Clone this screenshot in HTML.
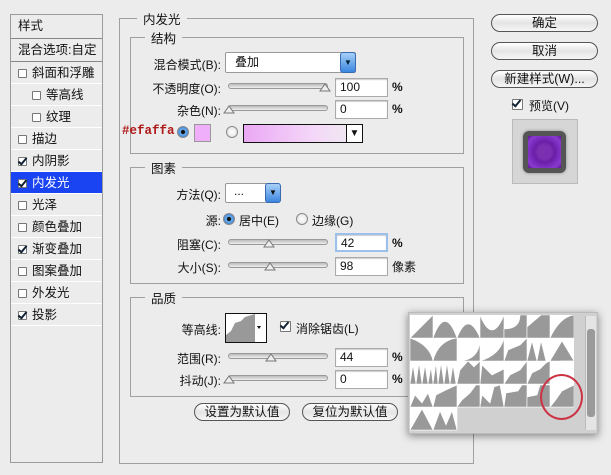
<!DOCTYPE html>
<html><head><meta charset="utf-8"><style>
*{box-sizing:border-box;margin:0;padding:0}
body{width:611px;height:475px;background:#ececec;font-family:"Liberation Sans","Noto Sans CJK SC",sans-serif;font-size:12px;color:#111;position:relative;overflow:hidden}
.a{position:absolute}
.lp{left:10px;top:14px;width:93px;height:449px;border:1px solid #9a9a9a;background:#ececec}
.row{position:absolute;left:0;width:91px;height:22px;line-height:22px;padding-left:7px;border-bottom:1px solid #fff;font-size:12.5px;white-space:nowrap}
.cb{display:inline-block;width:9px;height:9px;border:1px solid #777;background:#fff;vertical-align:-1px;margin-right:5px;border-radius:1px;position:relative}
.cb.on::after{content:"";position:absolute;left:1px;top:-2px;width:3px;height:7px;border:solid #123;border-width:0 2px 2px 0;transform:rotate(40deg)}
.box{position:absolute;border:1px solid #a0a0a0}
.tt{position:absolute;background:#ececec;padding:0 6px;font-size:12.5px}
.lb{position:absolute;text-align:right;font-size:12px;white-space:nowrap}
.in{position:absolute;width:53px;height:19px;border:1px solid #aaa;background:#fff;padding-left:4px;line-height:17px;font-size:12px;box-shadow:inset 0 1px 1px #ccc}
.sl{position:absolute;height:6px;border-radius:3px;border:1px solid #999;background:linear-gradient(#bbb,#eee)}
.th{position:absolute;width:12px;height:8px}
.btn{position:absolute;height:18px;border:1px solid #555;border-radius:9px;background:linear-gradient(#fff,#e4e4e4 50%,#f6f6f6);text-align:center;line-height:16px;font-size:12.5px}
.rd{position:absolute;width:12px;height:12px;border-radius:50%;border:1px solid #888;background:radial-gradient(#fff,#ddd)}
.rd.on{background:radial-gradient(#111 25%,#6ab0f0 35%,#2a6cc8)}
.pct{position:absolute;font-size:12px;font-weight:bold}
</style></head><body>

<div class="a lp">
 <div class="row" style="top:0;height:24px;border-bottom:1px solid #888">样式</div>
 <div class="row" style="top:24px;height:23px;border-bottom:1px solid #888">混合选项:自定</div>
 <div class="row" style="top:47px"><span class="cb"></span>斜面和浮雕</div>
 <div class="row" style="top:69px;padding-left:21px"><span class="cb"></span>等高线</div>
 <div class="row" style="top:91px;padding-left:21px"><span class="cb"></span>纹理</div>
 <div class="row" style="top:113px"><span class="cb"></span>描边</div>
 <div class="row" style="top:135px"><span class="cb on"></span>内阴影</div>
 <div class="row" style="top:157px;background:#1a43f2;color:#fff"><span class="cb on"></span>内发光</div>
 <div class="row" style="top:179px"><span class="cb"></span>光泽</div>
 <div class="row" style="top:201px"><span class="cb"></span>颜色叠加</div>
 <div class="row" style="top:223px"><span class="cb on"></span>渐变叠加</div>
 <div class="row" style="top:245px"><span class="cb"></span>图案叠加</div>
 <div class="row" style="top:267px"><span class="cb"></span>外发光</div>
 <div class="row" style="top:289px"><span class="cb on"></span>投影</div>
</div>

<div class="box" style="left:119px;top:18px;width:355px;height:446px"></div>
<div class="tt" style="left:137px;top:9px">内发光</div>

<div class="box" style="left:130px;top:37px;width:334px;height:117px"></div>
<div class="tt" style="left:145px;top:28px">结构</div>
<div class="lb" style="right:390px;top:56px">混合模式(B):</div>
<div class="a" style="left:225px;top:52px;width:131px;height:21px;border:1px solid #999;background:#fff;padding-left:9px;line-height:19px;border-radius:2px">叠加</div>
<div class="a" style="left:340px;top:52px;width:16px;height:21px;border-radius:3px;background:linear-gradient(#a8d0f8,#3c86e0);border:1px solid #3a6ab0;color:#023;font-size:8px;text-align:center;line-height:19px">▼</div>
<div class="lb" style="right:390px;top:80px">不透明度(O):</div>
<div class="sl" style="left:228px;top:83px;width:100px"></div>
<svg class="th" style="left:319px;top:82px;height:10px" viewBox="0 0 12 10"><path d="M1 9L6 2L11 9Z" fill="#eee" stroke="#777"/></svg>
<div class="in" style="left:335px;top:78px">100</div><div class="pct" style="left:392px;top:80px">%</div>
<div class="lb" style="right:390px;top:102px">杂色(N):</div>
<div class="sl" style="left:228px;top:105px;width:100px"></div>
<svg class="th" style="left:223px;top:104px;height:10px" viewBox="0 0 12 10"><path d="M1 9L6 2L11 9Z" fill="#eee" stroke="#777"/></svg>
<div class="in" style="left:335px;top:100px">0</div><div class="pct" style="left:392px;top:102px">%</div>
<div class="a" style="left:122px;top:124px;color:#b01818;font-family:'Liberation Mono',monospace;font-weight:bold;font-size:12.5px">#efaffa</div>
<div class="rd on" style="left:177px;top:126px"></div>
<div class="a" style="left:194px;top:124px;width:17px;height:18px;background:#efaffa;border:1px solid #999"></div>
<div class="rd" style="left:226px;top:126px"></div>
<div class="a" style="left:243px;top:124px;width:120px;height:19px;border:1px solid #111;background:linear-gradient(90deg,#eaa8f4,#f4d8f8 60%,#eee)"></div>
<div class="a" style="left:346px;top:124px;width:17px;height:19px;border:1px solid #111;background:#fff;font-size:10px;text-align:center;line-height:17px">▼</div>

<div class="box" style="left:130px;top:167px;width:334px;height:117px"></div>
<div class="tt" style="left:145px;top:158px">图素</div>
<div class="lb" style="right:390px;top:186px">方法(Q):</div>
<div class="a" style="left:225px;top:183px;width:55px;height:20px;border:1px solid #999;background:#fff;padding-left:8px;line-height:14px;border-radius:2px">...</div>
<div class="a" style="left:265px;top:183px;width:16px;height:20px;border-radius:3px;background:linear-gradient(#a8d0f8,#3c86e0);border:1px solid #3a6ab0;font-size:8px;text-align:center;line-height:18px">▼</div>
<div class="lb" style="right:390px;top:212px">源:</div>
<div class="rd on" style="left:223px;top:213px"></div><div class="a" style="left:239px;top:212px">居中(E)</div>
<div class="rd" style="left:296px;top:213px"></div><div class="a" style="left:312px;top:212px">边缘(G)</div>
<div class="lb" style="right:390px;top:236px">阻塞(C):</div>
<div class="sl" style="left:228px;top:239px;width:100px"></div>
<svg class="th" style="left:263px;top:238px;height:10px" viewBox="0 0 12 10"><path d="M1 9L6 2L11 9Z" fill="#eee" stroke="#777"/></svg>
<div class="in" style="left:335px;top:233px;border:2px solid #9cc0ea">42</div><div class="pct" style="left:392px;top:236px">%</div>
<div class="lb" style="right:390px;top:259px">大小(S):</div>
<div class="sl" style="left:228px;top:262px;width:100px"></div>
<svg class="th" style="left:264px;top:261px;height:10px" viewBox="0 0 12 10"><path d="M1 9L6 2L11 9Z" fill="#eee" stroke="#777"/></svg>
<div class="in" style="left:335px;top:257px">98</div><div class="a" style="left:392px;top:258px">像素</div>

<div class="box" style="left:130px;top:297px;width:334px;height:100px"></div>
<div class="tt" style="left:145px;top:288px">品质</div>
<div class="lb" style="right:390px;top:321px">等高线:</div>
<svg class="a" style="left:225px;top:313px" width="42" height="30" viewBox="0 0 42 30"><rect x="0.5" y="0.5" width="41" height="29" fill="#fff" stroke="#111"/><path d="M1 29L1 22L6 18L10 10L16 8L20 4L30 1L30 29Z" fill="#999"/><rect x="30" y="1" width="11" height="28" fill="#fff"/><path d="M32 13l4 0l-2 3z" fill="#111"/></svg>
<span class="cb on" style="position:absolute;left:280px;top:321px;width:11px;height:11px"></span>
<div class="a" style="left:296px;top:320px">消除锯齿(L)</div>
<div class="lb" style="right:390px;top:350px">范围(R):</div>
<div class="sl" style="left:228px;top:353px;width:100px"></div>
<svg class="th" style="left:265px;top:352px;height:10px" viewBox="0 0 12 10"><path d="M1 9L6 2L11 9Z" fill="#eee" stroke="#777"/></svg>
<div class="in" style="left:335px;top:348px">44</div><div class="pct" style="left:392px;top:350px">%</div>
<div class="lb" style="right:390px;top:372px">抖动(J):</div>
<div class="sl" style="left:228px;top:375px;width:100px"></div>
<svg class="th" style="left:223px;top:374px;height:10px" viewBox="0 0 12 10"><path d="M1 9L6 2L11 9Z" fill="#eee" stroke="#777"/></svg>
<div class="in" style="left:335px;top:370px">0</div><div class="pct" style="left:392px;top:372px">%</div>

<div class="btn" style="left:194px;top:403px;width:96px">设置为默认值</div>
<div class="btn" style="left:302px;top:403px;width:96px">复位为默认值</div>

<div class="btn" style="left:491px;top:14px;width:107px">确定</div>
<div class="btn" style="left:491px;top:42px;width:107px">取消</div>
<div class="btn" style="left:491px;top:70px;width:107px">新建样式(W)...</div>
<span class="cb on" style="position:absolute;left:512px;top:99px;width:11px;height:11px"></span>
<div class="a" style="left:529px;top:97px">预览(V)</div>
<div class="a" style="left:512px;top:119px;width:66px;height:65px;background:#d6d6d6;border:1px solid #bbb"></div>
<div class="a" style="left:523px;top:131px;width:43px;height:42px;border-radius:6px;background:#555;box-shadow:0 0 3px #888"></div>
<div class="a" style="left:528px;top:136px;width:33px;height:32px;background:radial-gradient(circle,#7a30b0 30%,#6a1ea8 45%,#8a3ad0 80%,#5a1690)"></div>

<div class="a" style="left:408px;top:312px;width:190px;height:122px;background:#d0d0d0;border:1px solid #bbb;box-shadow:0 2px 8px rgba(0,0,0,.45)"></div>
<svg class="a" style="left:410px;top:315px" width="164" height="116" viewBox="0 0 164 116">
<g fill="#999" stroke="#fff" stroke-width="0.6">
<rect x="0" y="0" width="164" height="92" fill="#fff"/>
<rect x="0" y="92" width="47" height="23" fill="#fff"/>
<path d="M0 23L23 0L23 23Z"/><path d="M23 23Q35 -10 47 23Z"/><path d="M47 23Q58 -5 70 23Z"/><path d="M70 0Q82 30 94 0L94 23L70 23Z"/><path d="M94 23L94 14Q110 14 110 0L117 0L117 23Z"/><path d="M117 23L117 12L131 0L140 0L140 23Z"/><path d="M140 23Q150 2 164 0L164 23Z"/>
<path d="M0 23Q20 30 23 46L0 46Z"/><path d="M23 46Q28 26 47 23L47 46Z"/><path d="M47 46Q70 46 70 23L70 46Z"/><path d="M70 46Q90 40 94 23L94 46Z"/><path d="M94 46L98 35L110 30L117 23L117 46Z"/><path d="M117 46L122 26L127 46L131 26L136 46Z" /><path d="M140 46L152 26L164 46Z"/>
<path d="M0 69L3 50L6 69L9 48L12 69L15 50L18 69L21 52L23 69Z"/><path d="M23 69L26 48L28 69L31 48L34 69L37 48L40 69L43 50L46 69Z"/><path d="M47 69L50 55L58 46L64 52L70 46L70 69Z"/><path d="M70 69L72 50L82 60L94 54L94 69Z"/><path d="M94 69L100 60L110 55L117 46L117 69Z"/><path d="M117 69L122 58L130 54L136 48L140 46L140 69Z"/><path d="M140 58L150 46L164 46L164 69L140 69Z" fill="#fff"/>
<path d="M0 92L5 80L12 88L18 78L23 92Z"/><path d="M23 92L26 80L36 75L47 70L47 92Z"/><path d="M47 92L52 85L60 78L66 70L70 70L70 92Z"/><path d="M70 92L72 80L80 88L84 72L90 70L94 92Z"/><path d="M94 92L96 78L108 76L112 70L117 70L117 92Z"/><path d="M117 92L117 82L127 80L130 70L140 70L140 92Z"/><path d="M140 92L145 86L152 76L164 70L164 92Z"/>
<path d="M0 115L12 94L23 115Z"/><path d="M23 115L30 96L36 110L42 96L47 115Z"/>
</g></svg>
<div class="a" style="left:585px;top:316px;width:11px;height:114px;background:#e4e4e4;border-left:1px solid #bbb"></div>
<div class="a" style="left:587px;top:329px;width:8px;height:88px;background:#9a9a9a;border-radius:3px"></div>
<div class="a" style="left:540px;top:374px;width:43px;height:46px;border:2px solid #cc3344;border-radius:50%"></div>
</body></html>
